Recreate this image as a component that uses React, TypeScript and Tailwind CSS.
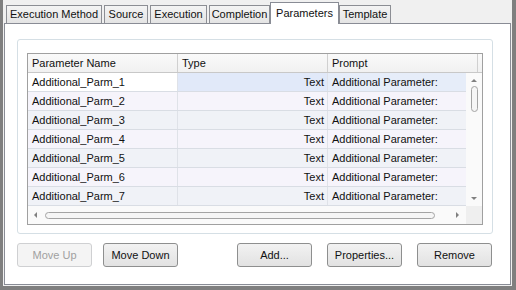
import React from 'react';

const TABS = [
  { label: 'Execution Method', w: 'w-[96px] mr-[2px]' },
  { label: 'Source', w: 'w-[44px] mr-[2px]' },
  { label: 'Execution', w: 'w-[57px] mr-[2px]' },
  { label: 'Completion', w: 'w-[61px]' },
  { label: 'Parameters', w: 'w-[69px]', active: true },
  { label: 'Template', w: 'w-[52px]' },
];

const ROWS = [1, 2, 3, 4, 5, 6, 7];

const Tab: React.FC<{ label: string; w: string; active?: boolean }> = ({ label, w, active }) =>
  active ? (
    <div className={`${w} h-[22px] -mb-px relative z-10 bg-white border border-b-0 border-[#898c95] flex items-center justify-center`}>
      {label}
    </div>
  ) : (
    <div className={`${w} h-[18px] bg-linear-to-b from-[#f4f4f4] to-[#e4e4e4] border border-b-0 border-[#8c8e94] flex items-center justify-center`}>
      {label}
    </div>
  );

const Button: React.FC<{ label: string; disabled?: boolean }> = ({ label, disabled }) => (
  <div
    className={
      disabled
        ? 'w-[75px] h-[24px] rounded-[3px] border border-[#cfd0d2] bg-[#f4f4f4] text-[#a0a0a0] flex items-center justify-center'
        : 'w-[75px] h-[24px] rounded-[3px] border border-[#8e8f8f] bg-linear-to-b from-[#f2f2f2] to-[#e2e2e2] flex items-center justify-center'
    }
  >
    {label}
  </div>
);

const rowBg = (i: number) => (i % 2 === 0 ? 'bg-[#f0f2f7]' : 'bg-[#f6f4fb]');

export default function App() {
  return (
    <div className="w-[516px] h-[290px] bg-[#7f7f7f] pl-[3px] pr-[4px] pb-[4px] font-['Liberation_Sans',Arial,sans-serif] text-[11px] text-[#111]">
      <div className="h-full bg-[#f0f0f0] flex flex-col pl-px pr-px pb-px">
        {/* tab strip */}
        <div className="h-[23px] flex items-end pl-[2px] shrink-0">
          {TABS.map((t) => (
            <Tab key={t.label} {...t} />
          ))}
        </div>

        {/* tab page */}
        <div className="flex-1 bg-white border border-[#898c95] pl-[12px] pr-[17px] pt-[15px] flex flex-col">
          <div className="h-[195px] rounded-[3px] border border-[#d5dfe5] pl-[9px] pr-[9px] pt-[13px] pb-[8px]">
            <div className="border border-[#a0a0a0] h-[172px] flex flex-col">
              {/* header */}
              <div className="h-[19px] flex bg-linear-to-b from-[#fafafa] to-[#f1f1f1] border-b border-[#c8c8c8] shrink-0">
                <div className="w-[150px] border-r border-[#d0d0d0] pl-[4px] flex items-center">Parameter Name</div>
                <div className="w-[150px] border-r border-[#d0d0d0] pl-[4px] flex items-center">Type</div>
                <div className="w-[150px] border-r border-[#d0d0d0] pl-[4px] flex items-center">Prompt</div>
                <div className="flex-1" />
              </div>

              <div className="flex h-[133px]">
                {/* rows */}
                <div className="w-[438px]">
                  {ROWS.map((n, i) => (
                    <div key={n} className={`h-[19px] flex border-b border-[#d9dde4] ${i === 0 ? '' : rowBg(i)}`}>
                      <div className={`w-[150px] border-r border-[#dfe2e8] pl-[4px] flex items-center ${i === 0 ? 'bg-white' : ''}`}>
                        Additional_Parm_{n}
                      </div>
                      <div className={`w-[150px] border-r border-[#dfe2e8] pr-[3px] flex items-center justify-end ${i === 0 ? 'bg-[#e1e9f9]' : ''}`}>
                        Text
                      </div>
                      <div className={`w-[138px] pl-[4px] flex items-center ${i === 0 ? 'bg-[#e6edf9]' : ''}`}>
                        Additional Parameter:
                      </div>
                    </div>
                  ))}
                </div>
                {/* vertical scrollbar */}
                <div className="w-[16px] bg-[#fafafa] flex flex-col items-center pt-[6px]">
                  <div className="w-0 h-0 border-l-[3px] border-r-[3px] border-b-[3px] border-l-transparent border-r-transparent border-b-[#808080]" />
                  <div className="mt-[4px] w-[7px] h-[26px] rounded-[4px] border border-[#a4a4a4] bg-[#f6f6f6]" />
                  <div className="flex-1" />
                  <div className="mb-[6px] w-0 h-0 border-l-[3px] border-r-[3px] border-t-[3px] border-l-transparent border-r-transparent border-t-[#808080]" />
                </div>
              </div>

              {/* horizontal scrollbar */}
              <div className="h-[18px] flex">
                <div className="w-[438px] bg-[#fafafa] flex items-center pl-[6px]">
                  <div className="w-0 h-0 border-t-[3px] border-b-[3px] border-r-[3px] border-t-transparent border-b-transparent border-r-[#808080]" />
                  <div className="ml-[8px] w-[390px] h-[7px] rounded-[4px] border border-[#a4a4a4] bg-[#f6f6f6]" />
                  <div className="flex-1" />
                  <div className="mr-[7px] w-0 h-0 border-t-[3px] border-b-[3px] border-l-[3px] border-t-transparent border-b-transparent border-l-[#808080]" />
                </div>
                <div className="w-[16px] bg-[#efefef]" />
              </div>
            </div>
          </div>

          {/* buttons */}
          <div className="mt-[9px] mr-px flex justify-between">
            <div className="flex gap-[11px]">
              <Button label="Move Up" disabled />
              <Button label="Move Down" />
            </div>
            <div className="flex gap-[15px]">
              <Button label="Add..." />
              <Button label="Properties..." />
              <Button label="Remove" />
            </div>
          </div>
        </div>
      </div>
    </div>
  );
}
